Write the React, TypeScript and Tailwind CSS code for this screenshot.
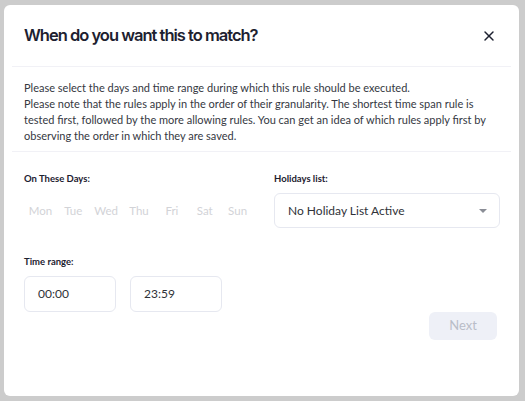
import { X } from "lucide-react";

const days = ["Mon", "Tue", "Wed", "Thu", "Fri", "Sat", "Sun"];

export default function App() {
  return (
    <main className="h-[401px] w-[525px] bg-[#cccccc] pl-[4px] pr-[6px] pt-[5px] pb-[5px] font-['Lato',sans-serif]">
      <div className="flex h-full flex-col rounded-[6px] bg-white">
        <header className="mx-[8px] flex h-[62px] items-center justify-between border-b border-[#f1f1f6] pl-[12px] pr-[14px]">
          <h2 className="font-['Inter',sans-serif] text-[16.5px] font-semibold tracking-[-1px] text-[#1d2130]">
            When do you want this to match?
          </h2>
          <X className="h-[16px] w-[16px] text-[#1d2130]" strokeWidth={2.2} />
        </header>

        <div className="mx-[8px] border-b border-[#f1f1f6] px-[12px] pb-[7px] pt-[13px] text-[11px] leading-[16px] text-[#35383f]">
          <p>Please select the days and time range during which this rule should be executed.</p>
          <p>
            Please note that the rules apply in the order of their granularity. The shortest time span rule is
            tested first, followed by the more allowing rules. You can get an idea of which rules apply first by
            observing the order in which they are saved.
          </p>
        </div>

        <div className="flex flex-1 flex-col px-[20px] pt-[20px]">
          <div className="flex gap-[20px]">
            <div className="w-[230px]">
              <div className="text-[9.5px] font-bold text-[#1d2130]">On These Days:</div>
              <div className="mt-[16px] flex text-[11.5px] text-[#d2d3d7]">
                {days.map((d) => (
                  <span key={d} className="w-[34.5px] text-center">
                    {d}
                  </span>
                ))}
              </div>
            </div>
            <div className="flex-1">
              <div className="text-[9.5px] font-bold text-[#1d2130]">Holidays list:</div>
              <div className="mt-[7px] flex h-[35px] w-[226px] items-center justify-between rounded-[6px] border border-[#e6e8f0] pl-[13px] pr-[12px] text-[12px] text-[#2f3238]">
                <span>No Holiday List Active</span>
                <span className="h-0 w-0 border-x-[4px] border-t-[4px] border-x-transparent border-t-[#8a8d96]" />
              </div>
            </div>
          </div>

          <div className="mt-[27px] text-[9.5px] font-bold text-[#1d2130]">Time range:</div>
          <div className="mt-[6px] flex gap-[14px]">
            <div className="flex h-[36px] w-[92px] items-center rounded-[6px] border border-[#e6e8f0] pl-[13px] text-[12px] text-[#2f3238]">
              00:00
            </div>
            <div className="flex h-[36px] w-[92px] items-center rounded-[6px] border border-[#e6e8f0] pl-[13px] text-[12px] text-[#2f3238]">
              23:59
            </div>
          </div>

          <div className="flex justify-end pr-[2px]">
            <button className="h-[28px] w-[68px] rounded-[6px] bg-[#eef0f7] text-[13px] text-[#b9bdc8]">
              Next
            </button>
          </div>
        </div>
      </div>
    </main>
  );
}
